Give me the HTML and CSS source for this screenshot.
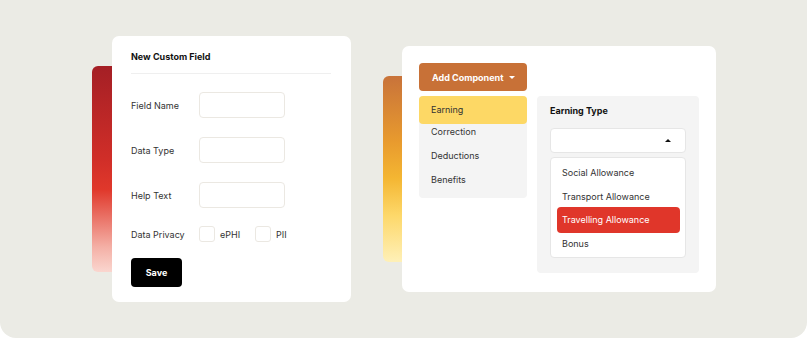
FILE: index.html
```html
<!DOCTYPE html>
<html>
<head>
<meta charset="utf-8">
<link rel="stylesheet" href="styles.css">
</head>
<body>
<div class="frame">
  <div class="group">
    <div class="bar bar-red"></div>
    <div class="card form-card">
      <div class="form-title">New Custom Field</div>
      <div class="divider"></div>
      <div class="row"><span class="label">Field Name</span><span class="input"></span></div>
      <div class="row"><span class="label">Data Type</span><span class="input"></span></div>
      <div class="row"><span class="label">Help Text</span><span class="input"></span></div>
      <div class="row privacy"><span class="label">Data Privacy</span>
        <span class="check"></span><span class="check-label">ePHI</span>
        <span class="check"></span><span class="check-label">PII</span>
      </div>
      <button class="save">Save</button>
    </div>
  </div>
  <div class="group group-right">
    <div class="bar bar-yellow"></div>
    <div class="card comp-card">
      <div class="comp-left">
        <div class="add-btn">Add Component <span class="caret-down"></span></div>
        <div class="menu">
          <div class="menu-item active">Earning</div>
          <div class="menu-item">Correction</div>
          <div class="menu-item">Deductions</div>
          <div class="menu-item">Benefits</div>
        </div>
      </div>
      <div class="type-panel">
        <div class="type-title">Earning Type</div>
        <div class="select"><span class="caret-up"></span></div>
        <div class="dropdown">
          <div class="dd-item">Social Allowance</div>
          <div class="dd-item">Transport Allowance</div>
          <div class="dd-item selected">Travelling Allowance</div>
          <div class="dd-item">Bonus</div>
        </div>
      </div>
    </div>
  </div>
</div>
</body>
</html>
```

FILE: styles.css
```css
* { box-sizing: border-box; }
html, body { margin: 0; padding: 0; background: #ffffff; }
body {
  font-family: Inter, "Noto Sans", "Liberation Sans", sans-serif;
  font-size: 9px;
  color: #333333;
}
.frame {
  width: 807px;
  height: 338px;
  background: #ebebe5;
  border-radius: 0 0 16px 16px;
  display: flex;
  align-items: center;
  padding-left: 92px;
  gap: 32px;
}
.group { display: flex; align-items: center; }
.bar { width: 20px; border-radius: 6px 0 0 6px; }
.bar-red {
  height: 206px;
  background: linear-gradient(180deg, #a41f25 0%, #d02e28 45%, #e0382b 60%, #f4b0a6 88%, #fad6cf 100%);
}
.bar-yellow {
  width: 19px;
  height: 186px;
  background: linear-gradient(180deg, #c8733a 0%, #e89a2e 35%, #f4b632 55%, #fdd86a 75%, #fef0b8 100%);
}
.card { background: #ffffff; border-radius: 7px; }
.form-card {
  width: 239px;
  height: 266px;
  padding: 15px 20px 15px 19px;
  display: flex;
  flex-direction: column;
}
.form-title { font-weight: 700; font-size: 9px; line-height: 12px; color: #111; }
.divider { height: 1px; background: #efefef; margin: 10px 0 18px; }
.row { display: flex; align-items: center; margin-bottom: 19px; }
.row.privacy { margin-bottom: 16px; margin-top: -1px; }
.label { width: 68px; color: #333; }
.input {
  width: 86px;
  height: 26px;
  border: 1px solid #ebe8e2;
  border-radius: 4px;
}
.check {
  width: 16px; height: 16px;
  border: 1px solid #ebe8e2;
  border-radius: 3px;
}
.check-label { margin-left: 5px; width: 35px; }
.save {
  width: 51px; height: 29px;
  background: #000; color: #fff;
  border: none; border-radius: 4px;
  font-family: inherit; font-weight: 700; font-size: 9px;
  padding: 0;
}
.comp-card {
  width: 314px;
  height: 246px;
  padding: 17px 17px 19px 17px;
  display: flex;
  align-items: flex-start;
  gap: 10px;
}
.comp-left { width: 108px; display: flex; flex-direction: column; gap: 5px; }
.add-btn {
  height: 28px;
  background: #c87137;
  color: #fff;
  font-weight: 700;
  border-radius: 4px;
  padding-left: 13px;
  display: flex; align-items: center;
}
.caret-down {
  margin-left: 6px;
  width: 0; height: 0;
  border-left: 3.5px solid transparent;
  border-right: 3.5px solid transparent;
  border-top: 3.5px solid #fff;
  margin-top: 1px;
}
.menu { background: #f4f4f4; border-radius: 4px; height: 102px; }
.menu-item { height: 24px; line-height: 24px; padding-left: 12px; color: #333; }
.menu-item.active {
  height: 28px; line-height: 27px;
  background: #fdd865;
  border-radius: 4px;
  margin-bottom: -4px;
}
.type-panel {
  margin-top: 33px;
  width: 162px;
  height: 177px;
  background: #f4f4f4;
  border-radius: 4px;
  padding: 9px 13px 15px 13px;
}
.type-title { font-weight: 700; line-height: 12px; color: #111; }
.select {
  margin-top: 11px;
  height: 25px;
  background: #fff;
  border: 1px solid #e6e6e6;
  border-radius: 4px;
  display: flex; align-items: center; justify-content: flex-end;
  padding-right: 14px;
}
.caret-up {
  width: 0; height: 0;
  border-left: 3.5px solid transparent;
  border-right: 3.5px solid transparent;
  border-bottom: 3.5px solid #111;
}
.dropdown {
  margin-top: 4px;
  height: 101px;
  background: #fff;
  border: 1px solid #e6e6e6;
  border-radius: 4px;
  padding: 3px 5px 0 6px;
}
.dd-item { height: 23.5px; line-height: 23.5px; padding-left: 5px; color: #333; }
.dd-item.selected {
  height: 26px; line-height: 26px;
  margin: -1px 0;
  background: #e0362a;
  color: #fff;
  border-radius: 4px;
}
```
